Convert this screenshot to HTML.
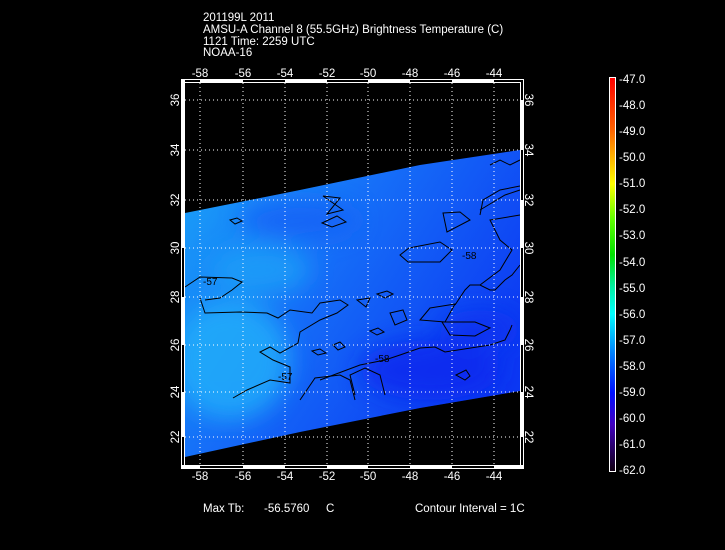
<!DOCTYPE html>
<html><head><meta charset="utf-8"><style>
html,body{margin:0;padding:0;background:#000;}
svg{display:block;}
text{font-family:"Liberation Sans",sans-serif;fill:#fff;font-size:11.5px;}
</style></head><body>
<svg width="725" height="550" viewBox="0 0 725 550" xmlns="http://www.w3.org/2000/svg">
<defs>
<linearGradient id="g1" x1="0" y1="0" x2="1" y2="0.6">
<stop offset="0" stop-color="#1aa4f8"/>
<stop offset="0.45" stop-color="#1670f8"/>
<stop offset="1" stop-color="#0c38f2"/>
</linearGradient>
<linearGradient id="cb" x1="0" y1="0" x2="0" y2="1">
<stop offset="0" stop-color="#ff0000"/>
<stop offset="0.13" stop-color="#ff6000"/>
<stop offset="0.2" stop-color="#ffb000"/>
<stop offset="0.27" stop-color="#ffff00"/>
<stop offset="0.36" stop-color="#60ff00"/>
<stop offset="0.45" stop-color="#00e000"/>
<stop offset="0.53" stop-color="#00f0a0"/>
<stop offset="0.6" stop-color="#00ffff"/>
<stop offset="0.7" stop-color="#0080ff"/>
<stop offset="0.8" stop-color="#0010ff"/>
<stop offset="0.88" stop-color="#4000c0"/>
<stop offset="1" stop-color="#100010"/>
</linearGradient>
<filter id="bl"><feGaussianBlur stdDeviation="12"/></filter>
<clipPath id="sw"><polygon points="185,213 300,190 420,165 520,150 520,391 420,408 300,432 185,457"/></clipPath>
</defs>
<text x="203" y="21">201199L 2011</text>
<text x="203" y="33">AMSU-A Channel 8 (55.5GHz) Brightness Temperature (C)</text>
<text x="203" y="45">1121 Time: 2259 UTC</text>
<text x="203" y="56">NOAA-16</text>
<g clip-path="url(#sw)">
<rect x="185" y="150" width="335" height="310" fill="url(#g1)"/>
<g filter="url(#bl)" opacity="0.8">
<ellipse cx="230" cy="360" rx="60" ry="60" fill="#20b0fa"/>
<ellipse cx="260" cy="270" rx="50" ry="25" fill="#1aa0f8"/>
<ellipse cx="430" cy="370" rx="70" ry="30" fill="#0828ee"/>
<ellipse cx="300" cy="220" rx="60" ry="20" fill="#1560f6"/>
<ellipse cx="480" cy="330" rx="40" ry="20" fill="#0a30f0"/>
</g>
</g>
<g fill="none" stroke="#000" stroke-width="1">
<polyline points="200,298 205,313 240,312 267,313 278,318 290,310 312,313 320,303 340,300 348,305 337,313 320,320 300,332 298,343 280,353 270,347 260,352 273,360 290,367 290,383 270,380 247,390 233,398"/>
<polyline points="185,287 200,277 232,278 242,282 232,290 220,298 205,300"/>
<polyline points="320,380 360,365 385,360 400,355 420,348 435,347 445,352 490,345 505,340 510,330 512,325"/>
<polyline points="455,305 465,290 470,285 480,285 490,290 495,290 505,280 512,275 520,265"/>
<polyline points="480,285 500,270 512,250 500,240 495,230 490,220 520,215"/>
<polyline points="480,210 505,195 520,190"/>
<polyline points="480,215 483,200 500,190 520,186"/>
<polygon points="430,308 455,304 445,322 420,320"/>
<polygon points="409,248 440,242 452,250 440,262 408,262 400,255"/>
<polygon points="442,322 475,322 490,328 475,336 450,335"/>
<polygon points="443,213 460,212 470,220 447,232"/>
<polygon points="323,196 343,210 327,214 340,198"/>
<polygon points="322,223 337,216 346,222 332,227"/>
<polygon points="390,313 403,310 407,320 395,325"/>
<polygon points="377,294 387,291 393,294 385,298"/>
<polygon points="357,300 370,298 366,307"/>
<polygon points="456,375 466,370 470,376 465,380"/>
<polygon points="333,345 340,342 345,347 338,350"/>
<polygon points="312,351 320,349 326,353 318,355"/>
<polygon points="230,220 237,218 242,221 235,224"/>
<polygon points="370,331 378,328 384,332 377,335"/>
<polyline points="355,395 350,375 365,368 380,375 385,395"/>
<polyline points="355,400 350,380 340,375 315,378 300,400"/>
<polyline points="490,165 500,160 510,165 520,160"/>
</g>
<g>
<text x="203" y="285" style="font-size:10px;fill:#000">-57</text>
<text x="278" y="380" style="font-size:10px;fill:#000">-57</text>
<text x="375" y="362" style="font-size:10px;fill:#000">-58</text>
<text x="462" y="259" style="font-size:10px;fill:#000">-58</text>
</g>
<g stroke="#fff" stroke-width="1" stroke-dasharray="1,3">
<line x1="200" y1="83" x2="200" y2="465"/><line x1="243" y1="83" x2="243" y2="465"/>
<line x1="285" y1="83" x2="285" y2="465"/><line x1="327" y1="83" x2="327" y2="465"/>
<line x1="368" y1="83" x2="368" y2="465"/><line x1="410" y1="83" x2="410" y2="465"/>
<line x1="452" y1="83" x2="452" y2="465"/><line x1="494" y1="83" x2="494" y2="465"/>
<line x1="185" y1="100" x2="520" y2="100"/><line x1="185" y1="150" x2="520" y2="150"/>
<line x1="185" y1="200" x2="520" y2="200"/><line x1="185" y1="248" x2="520" y2="248"/>
<line x1="185" y1="297" x2="520" y2="297"/><line x1="185" y1="345" x2="520" y2="345"/>
<line x1="185" y1="392" x2="520" y2="392"/><line x1="185" y1="437" x2="520" y2="437"/>
</g>
<rect x="181.5" y="79.5" width="342" height="389" fill="none" stroke="#fff"/>
<rect x="184.5" y="82.5" width="336" height="383" fill="none" stroke="#fff"/>
<g fill="#fff">
<rect x="200" y="80" width="43" height="3"/><rect x="285" y="80" width="42" height="3"/><rect x="368" y="80" width="42" height="3"/><rect x="452" y="80" width="42" height="3"/>
<rect x="182" y="465" width="18" height="3"/><rect x="243" y="465" width="42" height="3"/><rect x="327" y="465" width="41" height="3"/><rect x="410" y="465" width="42" height="3"/><rect x="494" y="465" width="29" height="3"/>
<rect x="182" y="80" width="3" height="168"/><rect x="182" y="297" width="3" height="48"/><rect x="182" y="392" width="3" height="45"/>
<rect x="520" y="100" width="3" height="50"/><rect x="520" y="200" width="3" height="48"/><rect x="520" y="297" width="3" height="48"/><rect x="520" y="392" width="3" height="45"/>
</g>
<g text-anchor="middle">
<text x="200" y="77">-58</text><text x="243" y="77">-56</text><text x="285" y="77">-54</text><text x="327" y="77">-52</text>
<text x="368" y="77">-50</text><text x="410" y="77">-48</text><text x="452" y="77">-46</text><text x="494" y="77">-44</text>
<text x="200" y="480">-58</text><text x="243" y="480">-56</text><text x="285" y="480">-54</text><text x="327" y="480">-52</text>
<text x="368" y="480">-50</text><text x="410" y="480">-48</text><text x="452" y="480">-46</text><text x="494" y="480">-44</text>
</g>
<g text-anchor="middle">
<text transform="translate(179,100) rotate(-90)">36</text><text transform="translate(179,150) rotate(-90)">34</text>
<text transform="translate(179,200) rotate(-90)">32</text><text transform="translate(179,248) rotate(-90)">30</text>
<text transform="translate(179,297) rotate(-90)">28</text><text transform="translate(179,345) rotate(-90)">26</text>
<text transform="translate(179,392) rotate(-90)">24</text><text transform="translate(179,437) rotate(-90)">22</text>
<text transform="translate(525,100) rotate(90)">36</text><text transform="translate(525,150) rotate(90)">34</text>
<text transform="translate(525,200) rotate(90)">32</text><text transform="translate(525,248) rotate(90)">30</text>
<text transform="translate(525,297) rotate(90)">28</text><text transform="translate(525,345) rotate(90)">26</text>
<text transform="translate(525,392) rotate(90)">24</text><text transform="translate(525,437) rotate(90)">22</text>
</g>
<rect x="609.5" y="77.5" width="6" height="394" fill="url(#cb)" stroke="#fff"/>
<g>
<text x="619" y="83">-47.0</text><text x="619" y="109">-48.0</text><text x="619" y="135">-49.0</text><text x="619" y="161">-50.0</text>
<text x="619" y="187">-51.0</text><text x="619" y="213">-52.0</text><text x="619" y="239">-53.0</text><text x="619" y="266">-54.0</text>
<text x="619" y="292">-55.0</text><text x="619" y="318">-56.0</text><text x="619" y="344">-57.0</text><text x="619" y="370">-58.0</text>
<text x="619" y="396">-59.0</text><text x="619" y="422">-60.0</text><text x="619" y="448">-61.0</text><text x="619" y="474">-62.0</text>
</g>
<text x="203" y="512">Max Tb:</text>
<text x="264" y="512">-56.5760</text>
<text x="326" y="512">C</text>
<text x="415" y="512">Contour Interval = 1C</text>
</svg>
</body></html>
